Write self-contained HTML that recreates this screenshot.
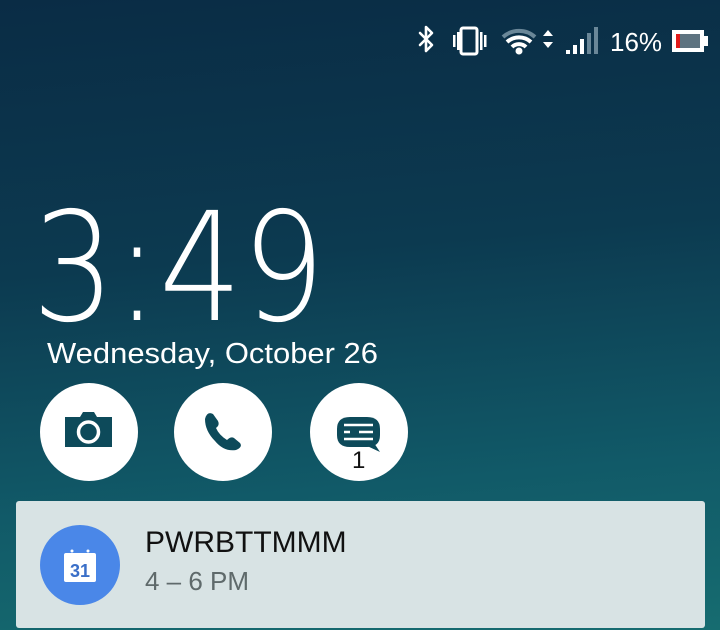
<!DOCTYPE html>
<html><head><meta charset="utf-8"><style>
body{margin:0;width:720px;height:630px;overflow:hidden;font-family:"Liberation Sans",sans-serif;
background:linear-gradient(175deg,#0a2c45 0%,#0c3a50 40%,#115a68 75%,#166c70 100%);position:relative}
.c{position:absolute;width:98px;height:98px;border-radius:50%;background:#fff;top:383px}
.c svg{position:absolute;left:0;top:0}
</style></head><body>
<svg width="720" height="70" style="position:absolute;left:0;top:0">
 <g stroke="#fff" stroke-width="2.6" fill="none" stroke-linecap="round" stroke-linejoin="round">
  <path d="M420 33 L432 45 L426 51 L426 27 L432 33 L420 45"/>
 </g>
 <rect x="461" y="28" width="16" height="26" rx="2" fill="none" stroke="#fff" stroke-width="3"/>
 <rect x="453" y="35" width="2.5" height="12" fill="#fff"/><rect x="457" y="32" width="2.5" height="18" fill="#fff"/>
 <rect x="480" y="32" width="2.5" height="18" fill="#fff"/><rect x="484" y="35" width="2.5" height="12" fill="#fff"/>
 <path d="M503 37 A24 24 0 0 1 535 37" stroke="#6a8798" stroke-width="4" fill="none"/>
 <path d="M507 42 A18 18 0 0 1 531 42" stroke="#fff" stroke-width="4" fill="none"/>
 <path d="M512 47 A10 10 0 0 1 526 47" stroke="#fff" stroke-width="4" fill="none"/>
 <circle cx="519" cy="51" r="3.5" fill="#fff"/>
 <path d="M543 36 L548 30 L553 36Z M543 42 L548 48 L553 42Z" fill="#fff"/>
 <rect x="566" y="50" width="4" height="4" fill="#fff"/><rect x="573" y="45" width="4" height="9" fill="#fff"/>
 <rect x="580" y="39" width="4" height="15" fill="#fff"/><rect x="587" y="33" width="4" height="21" fill="#6a8798"/>
 <rect x="594" y="27" width="4" height="27" fill="#6a8798"/>
 <text x="610" y="51" fill="#fff" font-size="26">16%</text>
 <rect x="672" y="30" width="32" height="22" fill="#fff"/>
 <rect x="676" y="34" width="24" height="14" fill="#5e7380"/>
 <rect x="676" y="34" width="4" height="14" fill="#e01b1b"/>
 <rect x="704" y="36" width="4" height="10" fill="#fff"/>
</svg>
<svg width="720" height="380" style="position:absolute;left:0;top:0">
 <text x="32" y="320" font-size="151" fill="#fff" font-family="DejaVu Sans" font-weight="200" textLength="293" lengthAdjust="spacingAndGlyphs">3:49</text>
 <text x="47" y="363" font-size="29" fill="#fff" textLength="331" lengthAdjust="spacingAndGlyphs">Wednesday, October 26</text>
</svg>
<div class="c" style="left:40px"><svg width="98" height="98"><path d="M25 34 H40 L43 29 H54 L57 34 H72 V64 H25Z" fill="#0d4a5a"/><circle cx="48.5" cy="49" r="10" fill="none" stroke="#fff" stroke-width="3.5"/></svg></div>
<div class="c" style="left:174px"><svg width="98" height="98"><path d="M31 36 Q33 28 39 31 L44 38 Q46 42 42 45 Q45 52 53 57 Q57 53 60 55 L66 60 Q69 64 62 67 Q50 69 41 58 Q31 48 31 36Z" fill="#0d4a5a"/></svg></div>
<div class="c" style="left:310px"><svg width="98" height="98"><path d="M27 46 Q27 34 40 34 H57 Q70 34 70 46 V52 Q70 64 57 64 H40 Q27 64 27 52Z" fill="#0d4a5a"/><path d="M55 62 L70 69 L64 60Z" fill="#0d4a5a"/><path d="M34 42 H63 M34 49 H63 M34 56 H63" stroke="#fff" stroke-width="2.6"/><path d="M40 49 H49" stroke="#0d4a5a" stroke-width="3"/><text x="42" y="85" font-size="24" fill="#111">1</text></svg></div>
<div style="position:absolute;left:16px;top:501px;width:689px;height:127px;background:#d8e3e4;border-radius:3px"></div>
<div style="position:absolute;left:40px;top:525px;width:80px;height:80px;border-radius:50%;background:#4a87e8"></div>
<svg width="36" height="34" style="position:absolute;left:63px;top:549px"><rect x="1" y="4" width="32" height="29" rx="2" fill="#fff"/><circle cx="9" cy="2" r="1.5" fill="#fff"/><circle cx="25" cy="2" r="1.5" fill="#fff"/><text x="17" y="28" font-size="18" fill="#3a6fc8" font-weight="bold" text-anchor="middle">31</text></svg>
<div style="position:absolute;left:145px;top:526px;font-size:30px;color:#111">PWRBTTMMM</div>
<div style="position:absolute;left:145px;top:566px;font-size:26px;color:#5f6a6b">4 – 6 PM</div>
</body></html>
